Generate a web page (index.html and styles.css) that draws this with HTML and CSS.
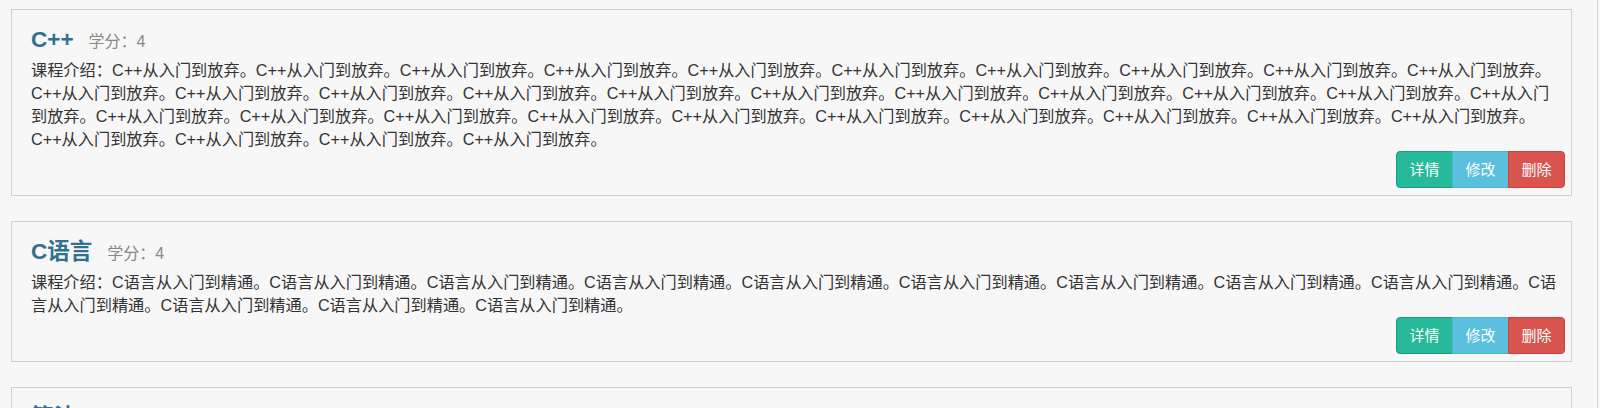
FILE: index.html
```html
<!DOCTYPE html>
<html lang="zh-CN">
<head>
	<meta charset="UTF-8">
	<title>课程列表</title>
	<link rel="stylesheet" href="styles.css">
</head>
<body>
	<div class="page">
		<div class="course">
			<div class="course-title">
				<h3>C++</h3>
				<span class="credit">学分：4</span>
			</div>
			<p class="intro">课程介绍：C++从入门到放弃。C++从入门到放弃。C++从入门到放弃。C++从入门到放弃。C++从入门到放弃。C++从入门到放弃。C++从入门到放弃。C++从入门到放弃。C++从入门到放弃。C++从入门到放弃。C++从入门到放弃。C++从入门到放弃。C++从入门到放弃。C++从入门到放弃。C++从入门到放弃。C++从入门到放弃。C++从入门到放弃。C++从入门到放弃。C++从入门到放弃。C++从入门到放弃。C++从入门到放弃。C++从入门到放弃。C++从入门到放弃。C++从入门到放弃。C++从入门到放弃。C++从入门到放弃。C++从入门到放弃。C++从入门到放弃。C++从入门到放弃。C++从入门到放弃。C++从入门到放弃。C++从入门到放弃。C++从入门到放弃。C++从入门到放弃。C++从入门到放弃。</p>
			<div class="btn-group">
				<button class="btn btn-success">详情</button>
				<button class="btn btn-info">修改</button>
				<button class="btn btn-danger">删除</button>
			</div>
		</div>
		<div class="course">
			<div class="course-title">
				<h3>C语言</h3>
				<span class="credit">学分：4</span>
			</div>
			<p class="intro">课程介绍：C语言从入门到精通。C语言从入门到精通。C语言从入门到精通。C语言从入门到精通。C语言从入门到精通。C语言从入门到精通。C语言从入门到精通。C语言从入门到精通。C语言从入门到精通。C语言从入门到精通。C语言从入门到精通。C语言从入门到精通。C语言从入门到精通。</p>
			<div class="btn-group">
				<button class="btn btn-success">详情</button>
				<button class="btn btn-info">修改</button>
				<button class="btn btn-danger">删除</button>
			</div>
		</div>
		<div class="course">
			<div class="course-title">
				<h3>算法</h3>
				<span class="credit">学分：3</span>
			</div>
			<p class="intro">课程介绍：算法从入门到精通。</p>
			<div class="btn-group">
				<button class="btn btn-success">详情</button>
				<button class="btn btn-info">修改</button>
				<button class="btn btn-danger">删除</button>
			</div>
		</div>
	</div>
</body>
</html>
```

FILE: styles.css
```css
*{
	padding:0;
	margin:0;
	box-sizing:border-box;
}
html,body{
	overflow: hidden;
}
body{
	background: #f7f7f7;
	font-family: "Liberation Sans", "Noto Sans CJK SC", sans-serif;
	color: #333;
}
.page{
	width: 1598px;
	min-height: 100vh;
	padding: 9px 25px 0 11px;
	border-right: 1px solid #d6d6d6;
}
.course{
	border: 1px solid #d0d0d0;
	background: #f7f7f7;
	padding: 18px 6px 7px 19px;
	margin-bottom: 25px;
}
.course-title{
	display: flex;
	align-items: baseline;
	height: 26px;
}
.course-title h3{
	font-size: 22.5px;
	line-height: 24px;
	font-weight: bold;
	color: #31708f;
}
.credit{
	font-size: 16px;
	line-height: 24px;
	color: #888;
	margin-left: 15px;
}
.intro{
	font-size: 16.2px;
	line-height: 23px;
	margin: 5px 4px 0 0;
}
.btn-group{
	display: flex;
	justify-content: flex-end;
}
.btn{
	font-family: inherit;
	font-size: 15px;
	line-height: 23px;
	padding: 6px 12.5px;
	color: #fff;
	border: 1px solid transparent;
	outline: none;
	margin-left: -1px;
}
.btn:first-child{
	border-radius: 4px 0 0 4px;
}
.btn:last-child{
	border-radius: 0 4px 4px 0;
}
.btn-success{
	background: #26b99a;
	border-color: #169f85;
}
.btn-info{
	background: #5bc0de;
	border-color: #46b8da;
}
.btn-danger{
	background: #d9534f;
	border-color: #d43f3a;
}
```
